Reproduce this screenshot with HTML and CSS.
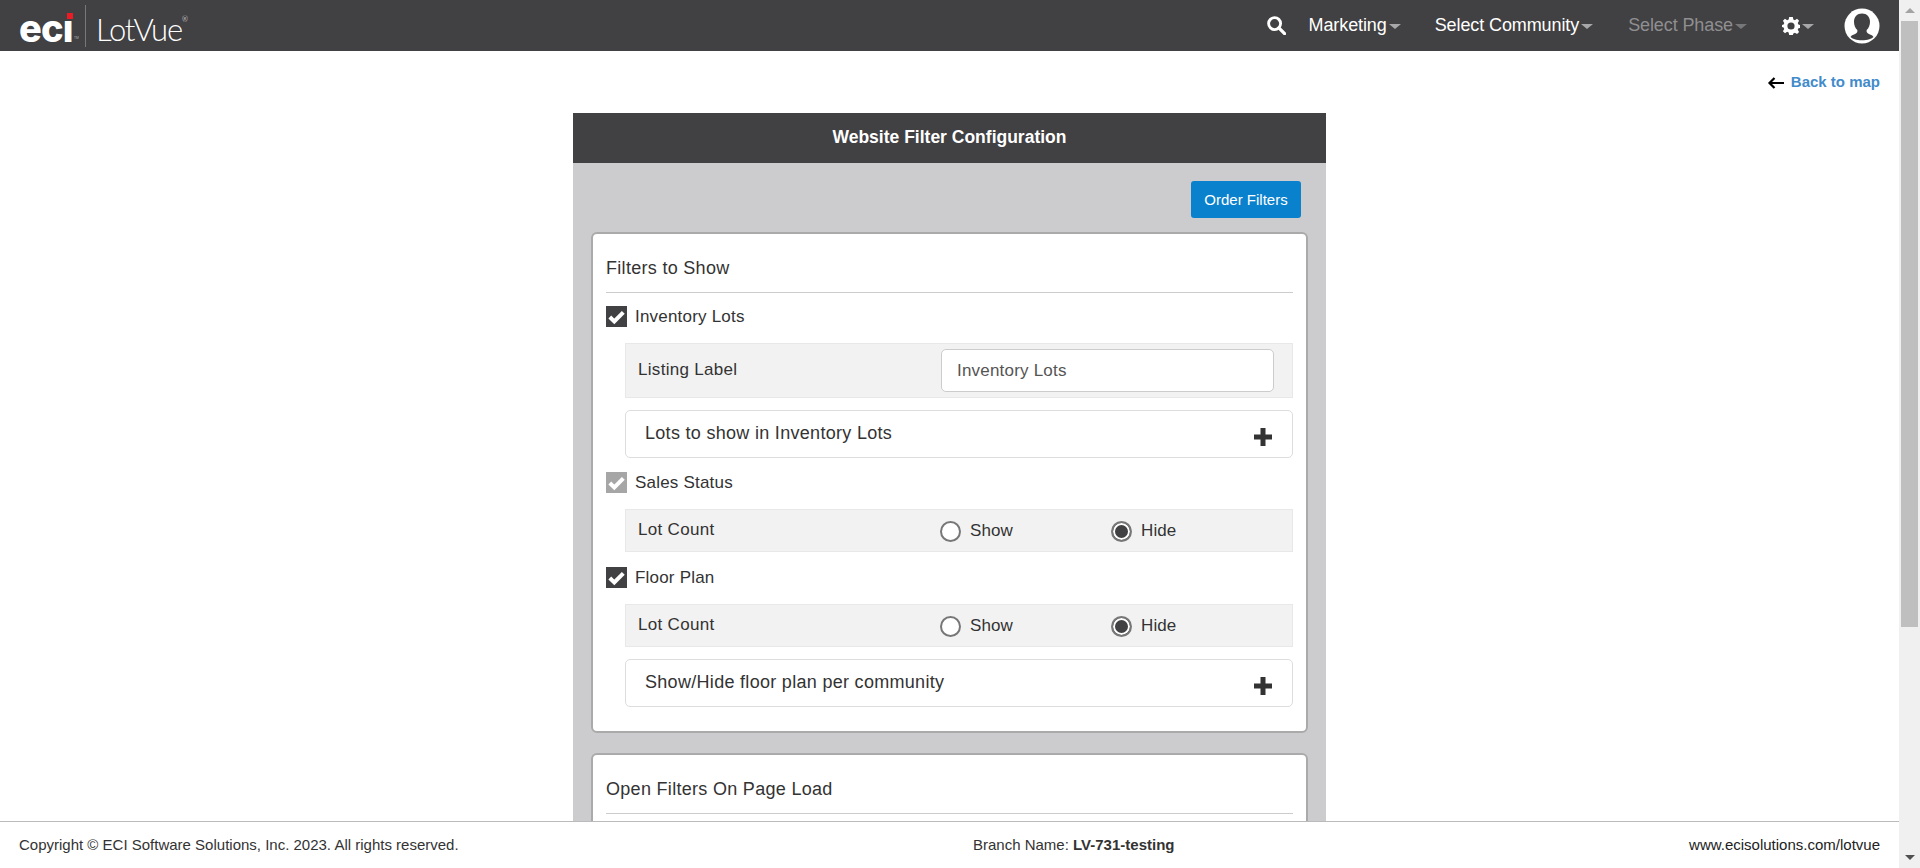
FILE: index.html
```html
<!DOCTYPE html>
<html lang="en">
<head>
<meta charset="utf-8">
<title>Website Filter Configuration</title>
<link rel="stylesheet" href="styles.css">
</head>
<body>
<div class="window">
  <div class="page">
    <header class="nav">
      <div class="logo">
        <span class="eci">ecı<i class="eci-dot"></i><small class="tm">TM</small></span>
        <span class="logo-sep"></span>
        <span class="lotvue">LotVue<sup class="reg">®</sup></span>
      </div>
      <nav class="nav-items">
        <svg class="search" viewBox="0 0 20 20"><circle cx="8" cy="8" r="6.300" fill="none" stroke="#fff" stroke-width="3"/><path d="M12.500 12.500L18.500 18.500" stroke="#fff" stroke-width="3.400" stroke-linecap="round"/></svg>
        <span class="nav-item i-marketing">Marketing<b class="caret"></b></span>
        <span class="nav-item i-community">Select Community<b class="caret"></b></span>
        <span class="nav-item i-phase muted">Select Phase<b class="caret"></b></span>
        <span class="nav-item i-gear">
          <svg class="gear" viewBox="0 0 20 20"><path fill="#fff" fill-rule="evenodd" d="M8 0h4l.6 2.800 1.700.7L16.700 2 19 4.300l-1.500 2.400.7 1.700L20 8.900v3.200l-1.800.5-.7 1.700 1.500 2.400-2.300 2.300-2.400-1.500-1.700.7L12 20H8l-.6-2.800-1.700-.7L3.300 18 1 15.700l1.500-2.400-.7-1.700L0 11.100V8.900l1.800-.5.7-1.700L1 4.300 3.300 2l2.400 1.500 1.700-.7zM10 6a4 4 0 1 0 0 8 4 4 0 0 0 0-8z"/></svg>
          <b class="caret"></b>
        </span>
        <svg class="avatar" viewBox="0 0 36 36"><circle cx="18" cy="18" r="17.500" fill="#fff"/><path fill="#414042" d="M18 5.500c-4.800 0-8 3.500-8 8.300 0 3.400 1.300 6.400 3.300 8.200.4 1.700-.2 3-1.800 3.700-2 .9-3.900 1.500-5 3.200 1.500 1.600 6 3.400 11.500 3.400s10-1.800 11.500-3.400c-1.100-1.700-3-2.300-5-3.200-1.600-.7-2.200-2-1.800-3.700 2-1.800 3.300-4.800 3.300-8.200 0-4.800-3.200-8.300-8-8.300z"/></svg>
      </nav>
    </header>

    <main class="content">
      <div class="back-row">
        <svg class="back-arrow" viewBox="0 0 18 14"><path d="M17 7H3M7.500 2L2.500 7l5 5" fill="none" stroke="#000" stroke-width="2.200"/></svg>
        <a class="back-link">Back to map</a>
      </div>

      <section class="panel">
        <h1 class="panel-head">Website Filter Configuration</h1>
        <div class="panel-body">
          <div class="actions"><button class="btn">Order Filters</button></div>

          <div class="card">
            <h2 class="card-title">Filters to Show</h2>
            <label class="check first"><span class="box"><svg viewBox="0 0 21 21"><path d="M3.800 11l4.500 4.500L17.300 6.300" fill="none" stroke="#fff" stroke-width="4"/></svg></span>Inventory Lots</label>
            <div class="row row-input">
              <span class="row-label">Listing Label</span>
              <input class="text-input" value="Inventory Lots">
            </div>
            <div class="accordion"><span>Lots to show in Inventory Lots</span><svg class="plus" viewBox="0 0 18 18"><path d="M6.500 0h5v6.500H18v5h-6.500V18h-5v-6.500H0v-5h6.500z" fill="#333"/></svg></div>
            <label class="check"><span class="box disabled"><svg viewBox="0 0 21 21"><path d="M3.800 11l4.500 4.500L17.300 6.300" fill="none" stroke="#fff" stroke-width="4"/></svg></span>Sales Status</label>
            <div class="row">
              <span class="row-label">Lot Count</span>
              <span class="radio-opt"><span class="radio"></span>Show</span>
              <span class="radio-opt"><span class="radio on"></span>Hide</span>
            </div>
            <label class="check"><span class="box"><svg viewBox="0 0 21 21"><path d="M3.800 11l4.500 4.500L17.300 6.300" fill="none" stroke="#fff" stroke-width="4"/></svg></span>Floor Plan</label>
            <div class="row">
              <span class="row-label">Lot Count</span>
              <span class="radio-opt"><span class="radio"></span>Show</span>
              <span class="radio-opt"><span class="radio on"></span>Hide</span>
            </div>
            <div class="accordion"><span>Show/Hide floor plan per community</span><svg class="plus" viewBox="0 0 18 18"><path d="M6.500 0h5v6.500H18v5h-6.500V18h-5v-6.500H0v-5h6.500z" fill="#333"/></svg></div>
          </div>

          <div class="card">
            <h2 class="card-title">Open Filters On Page Load</h2>
          </div>
        </div>
      </section>
    </main>

    <footer class="footer">
      <span class="foot-left">Copyright © ECI Software Solutions, Inc. 2023. All rights reserved.</span>
      <span class="foot-mid">Branch Name: <b>LV-731-testing</b></span>
      <span class="foot-right">www.ecisolutions.com/lotvue</span>
    </footer>
  </div>

  <div class="scrollbar">
    <span class="sb-btn"><i class="sb-up"></i></span>
    <span class="sb-thumb"></span>
    <span class="sb-fill"></span>
    <span class="sb-btn"><i class="sb-down"></i></span>
  </div>
</div>
</body>
</html>
```
FILE: styles.css
```css
* { box-sizing: border-box; }
html, body { margin: 0; height: 100%; overflow: hidden; }
body { font-family: "Liberation Sans", Arial, sans-serif; color: #333; background: #fff; }
.window { display: flex; height: 868px; }
.page { flex: 1; min-width: 0; display: flex; flex-direction: column; }

.nav { height: 51px; flex: none; background: #414042; display: flex; align-items: center; justify-content: space-between; color: #fff; }
.logo { display: flex; align-items: center; padding-left: 19px; }
.eci { position: relative; top: 2px; font-family: Inter, "Liberation Sans", sans-serif; font-weight: 800; font-size: 38px; line-height: 42px; letter-spacing: -.8px; color: #fff; width: 62px; }
.eci-dot { position: absolute; left: 48px; top: 6px; width: 6px; height: 6px; background: #ed1c24; }
.tm { position: absolute; left: 55px; top: 29px; font-size: 3px; letter-spacing: 0; font-weight: 400; line-height: 4px; color: #bbb; }
.logo-sep { width: 1px; height: 42px; background: #77777a; margin: 0 10px 0 4px; }
.lotvue { position: relative; top: 3px; font-family: Lato, "Open Sans", sans-serif; font-weight: 300; font-size: 31px; line-height: 42px; letter-spacing: -1.200px; color: #fff; }
.reg { position: absolute; right: -6px; top: 7px; font-size: 7px; line-height: 8px; letter-spacing: 0; }

.nav-items { display: flex; align-items: center; font-size: 18px; letter-spacing: -.1px; }
.search { width: 19px; height: 19px; margin-right: 23px; }
.nav-item { display: flex; align-items: center; white-space: nowrap; }
.i-marketing { margin-right: 34px; }
.i-community { margin-right: 35px; }
.i-phase { margin-right: 35px; }
.i-gear { margin-right: 30px; }
.muted { color: #8f8f91; }
.caret { display: inline-block; width: 0; height: 0; margin-left: 2px; margin-top: 2px; border-left: 6px solid transparent; border-right: 6px solid transparent; border-top: 5px solid #a7a7a9; }
.muted .caret { border-top-color: #77777a; }
.gear { width: 18px; height: 18px; }
.avatar { width: 36px; height: 36px; margin-right: 19px; }

.content { flex: 1; min-height: 0; overflow: hidden; position: relative; }
.back-row { height: 62px; display: flex; align-items: flex-start; justify-content: flex-end; padding: 22px 19px 0 0; }
.back-arrow { width: 18px; height: 14px; margin: 3px 6px 0 0; }
.back-link { font-size: 15px; font-weight: 700; line-height: 18px; color: #428bca; }

.panel { width: 753px; margin-left: 573px; }
.panel-head { margin: 0; height: 50px; background: #414042; color: #fff; font-size: 17.500px; font-weight: 700; line-height: 48px; text-align: center; }
.panel-body { background: #cccccf; padding: 18px 18px 20px; }
.actions { display: flex; justify-content: flex-end; padding-right: 7px; margin-bottom: 14px; }
.btn { width: 110px; height: 37px; border: 0; border-radius: 3px; background: #0a81cd; color: #fff; font: 15px "Liberation Sans", Arial, sans-serif; padding: 0; }

.card { background: #fff; border: 2px solid #aaa; border-radius: 6px; padding: 0 13px 24px; margin-bottom: 20px; }
.card-title { margin: 0; height: 59px; border-bottom: 1px solid #ccc; font-size: 18px; letter-spacing: .3px; font-weight: 400; line-height: 68px; }

.check { display: flex; align-items: center; height: 21px; font-size: 17px; letter-spacing: .2px; margin: 14px 0 16px; }
.check.first { margin-top: 13px; }
.box { width: 21px; height: 21px; margin-right: 8px; background: #414042; flex: none; display: block; }
.box svg { display: block; width: 21px; height: 21px; }
.box.disabled { background: #a6a6a6; }

.row { margin-left: 19px; height: 43px; background: #f2f2f2; border: 1px solid #e8e8e8; display: flex; align-items: center; padding-left: 12px; font-size: 17px; letter-spacing: .3px; }
.row-label { width: 302px; flex: none; position: relative; top: -1px; }
.row-input { height: 55px; margin-bottom: 12px; }
.row-input .row-label { width: 303px; }
.text-input { width: 333px; height: 43px; border: 1px solid #ccc; border-radius: 5px; background: #fff; padding: 0 15px; font: 17px "Liberation Sans", Arial, sans-serif; letter-spacing: .2px; color: #555; }
.radio-opt { display: flex; align-items: center; width: 171px; letter-spacing: .1px; }
.radio { width: 21px; height: 21px; flex: none; margin-right: 9px; border: 2px solid #777; border-radius: 50%; background: #fff; position: relative; top: 1px; }
.radio.on { background: #414042; box-shadow: inset 0 0 0 2px #fff; }

.accordion { margin-left: 19px; height: 48px; border: 1px solid #ddd; border-radius: 5px; background: #fff; display: flex; align-items: center; justify-content: space-between; padding: 0 20px 0 19px; font-size: 18px; letter-spacing: .3px; }
.accordion span { position: relative; top: -1px; }
.plus { width: 18px; height: 18px; position: relative; top: 3px; }
.row + .check { margin-top: 15px; }
.row + .accordion { margin-top: 12px; }

.footer { height: 47px; flex: none; border-top: 1px solid #bbb; background: #fff; display: grid; grid-template-columns: 954px 1fr auto; align-items: center; padding: 0 19px 2px; font-size: 15px; }
.foot-left { white-space: nowrap; }
.foot-mid { white-space: nowrap; }
.foot-right { color: #222; }

.scrollbar { width: 21px; flex: none; background: #f0f0f0; display: flex; flex-direction: column; }
.sb-btn { height: 21px; flex: none; display: flex; align-items: center; justify-content: center; }
.sb-up { width: 0; height: 0; border-left: 5px solid transparent; border-right: 5px solid transparent; border-bottom: 5px solid #a3a3a3; }
.sb-down { width: 0; height: 0; border-left: 5px solid transparent; border-right: 5px solid transparent; border-top: 5px solid #505050; }
.sb-thumb { height: 606px; flex: none; margin: 0 2px; background: #bfbfbf; }
.sb-fill { flex: 1; }
```
